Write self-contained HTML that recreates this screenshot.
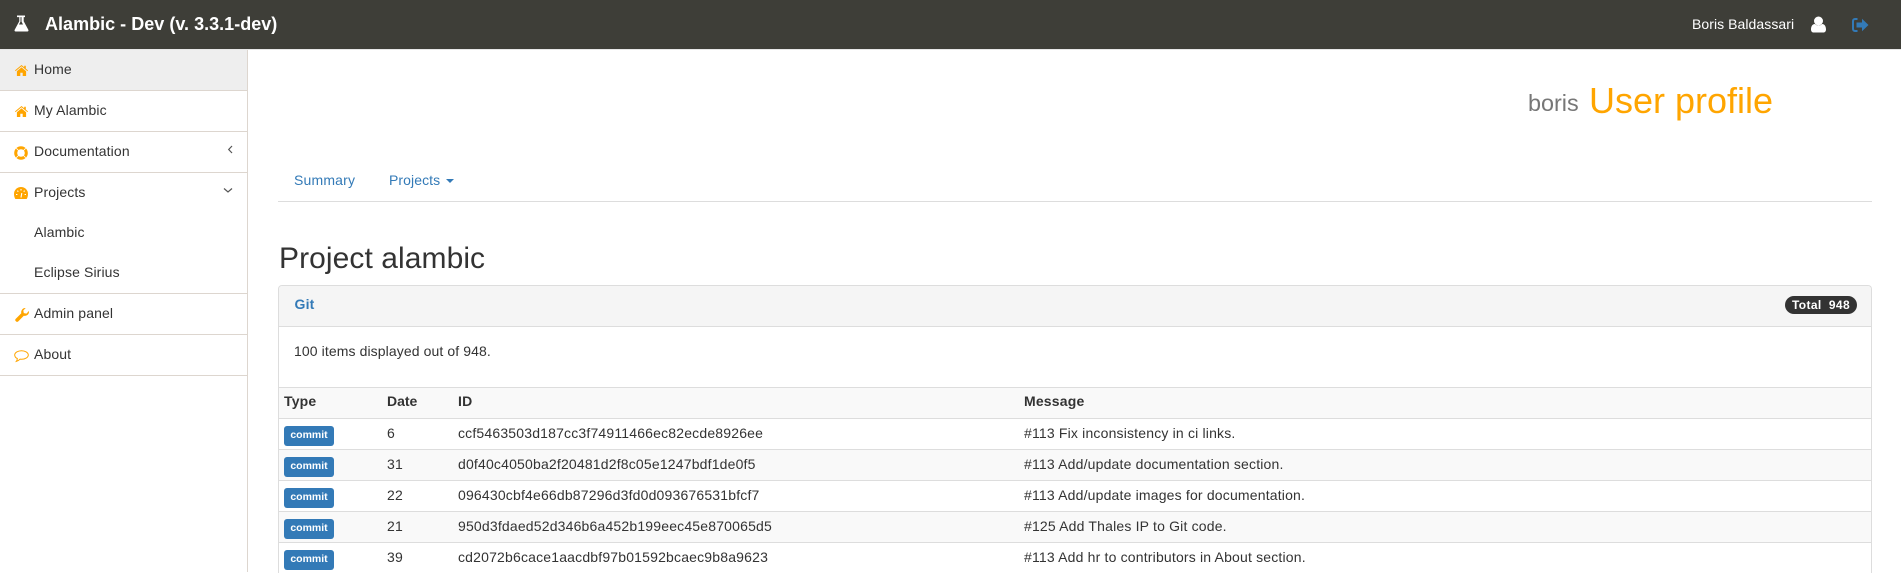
<!DOCTYPE html>
<html><head><meta charset="utf-8"><title>Alambic</title>
<style>
html,body{margin:0;padding:0;width:1901px;height:572px;overflow:hidden;background:#fff;font-family:"Liberation Sans",sans-serif;font-size:14px;color:#333;letter-spacing:.18px}
.a{position:absolute;white-space:nowrap}
#top{position:absolute;left:0;top:0;width:1901px;height:49px;background:#3e3e38}
#sep{position:absolute;left:0;top:49px;width:1901px;height:1px;background:#e7e7e7}
#side{position:absolute;left:0;top:50px;width:247px;height:522px;border-right:1px solid #ddd6cf}
.ln{position:absolute;left:0;width:247px;height:1px;background:#ddd6cf}
.m{position:absolute;left:34px;line-height:20px;color:#333;white-space:nowrap;letter-spacing:.12px}
.ic{position:absolute}
.h{position:absolute;left:278px;width:1594px;height:1px;background:#ddd}
.b{position:absolute;left:284px;width:50px;height:20px;background:#337ab7;border-radius:3px;color:#fff;font-weight:bold;font-size:10.5px;line-height:19px;text-align:center;letter-spacing:0}
</style></head><body>
<div id="top"></div><div id="sep"></div>
<svg class="ic" style="left:13px;top:15px" width="16" height="17" viewBox="0 0 16 17"><path d="M4 .5h8v1.600h-1.300v4.200l4.600 8.400c.5 1 0 1.800-1 1.800H2.700c-1 0-1.500-.8-1-1.800l4.600-8.400V2.100H4zM7.500 2.100v4.500L6 9.500h4L8.500 6.600V2.100z" fill="#fff" fill-rule="evenodd"/></svg>
<div class="a" style="left:45px;top:14px;font-size:18px;font-weight:bold;line-height:20px;color:#fff;letter-spacing:.02px">Alambic - Dev (v. 3.3.1-dev)</div>
<div class="a" style="left:1692px;top:14px;line-height:20px;color:#fff;letter-spacing:.06px">Boris Baldassari</div>
<svg class="ic" style="left:1810px;top:16px" width="17" height="17" viewBox="0 0 17 17"><circle cx="8.500" cy="5" r="4.500" fill="#fff"/><path d="M1 13.500c0-3 1.300-5.500 3.800-5.500C5.800 9 7 9.500 8.500 9.500S11.200 9 12.200 8c2.500 0 3.800 2.500 3.800 5.500 0 1.700-1 3-2.500 3h-10C2 16.500 1 15.200 1 13.500z" fill="#fff"/></svg>
<svg class="ic" style="left:1852px;top:18px" width="17" height="14" viewBox="0 0 17 14"><path d="M5.500 1H3C1.800 1 1 1.800 1 3v8c0 1.200.8 2 2 2h2.500" fill="none" stroke="#337ab7" stroke-width="2"/><path d="M4.500 4.500H10V.7L16.500 7 10 13.300V9.500H4.500z" fill="#337ab7"/></svg>

<div id="side"></div>
<div class="a" style="left:0;top:50px;width:247px;height:40px;background:#eee"></div>
<div class="ln" style="top:90px"></div>
<div class="ln" style="top:131px"></div>
<div class="ln" style="top:172px"></div>
<div class="ln" style="top:293px"></div>
<div class="ln" style="top:334px"></div>
<div class="ln" style="top:375px"></div>
<svg class="ic" style="left:15px;top:65px" width="13" height="11" viewBox="0 0 13 11"><path d="M6.500 0L0 5.400l.6.700 5.900-4.900 5.900 4.900.6-.7-2.200-1.800V.8H9.200v1.400zM1.900 6.300V11h3.400V7.800h2.400V11h3.400V6.300L6.500 2.400z" fill="#ffa500"/></svg>
<div class="m" style="top:59px">Home</div>
<svg class="ic" style="left:15px;top:106px" width="13" height="11" viewBox="0 0 13 11"><path d="M6.500 0L0 5.400l.6.700 5.900-4.900 5.900 4.900.6-.7-2.200-1.800V.8H9.200v1.400zM1.900 6.300V11h3.400V7.800h2.400V11h3.400V6.300L6.500 2.400z" fill="#ffa500"/></svg>
<div class="m" style="top:100px">My Alambic</div>
<svg class="ic" style="left:14px;top:146px" width="14" height="14" viewBox="0 0 14 14"><circle cx="7" cy="7" r="5.300" fill="none" stroke="#ffa500" stroke-width="3"/><path d="M2.300 2.300L4.700 4.700M11.700 2.300L9.300 4.700M2.300 11.700L4.700 9.300M11.700 11.700L9.300 9.300" stroke="#fff" stroke-width=".8"/></svg>
<div class="m" style="top:141px">Documentation</div>
<svg class="ic" style="left:227px;top:145px" width="7" height="9" viewBox="0 0 7 9"><path d="M5 1L1.700 4.500 5 8" fill="none" stroke="#555" stroke-width="1.200"/></svg>
<svg class="ic" style="left:14px;top:187px" width="14" height="12" viewBox="0 0 14 12"><path d="M7 0a7 7 0 0 0-7 7c0 2 .5 3.500 1.300 5h11.400C13.500 10.500 14 9 14 7a7 7 0 0 0-7-7z" fill="#ffa500"/><path d="M7 10.500L7.800 6M7 2v1.500M3.400 3.700l.9.900M10.600 3.700l-.9.900M2 7.500h1.400M10.600 7.500H12" stroke="#fff" stroke-width="1.100"/></svg>
<div class="m" style="top:182px">Projects</div>
<svg class="ic" style="left:223px;top:187px" width="10" height="7" viewBox="0 0 10 7"><path d="M1 1.500L5 5l4-3.500" fill="none" stroke="#555" stroke-width="1.200"/></svg>
<div class="m" style="top:222px">Alambic</div>
<div class="m" style="top:262px">Eclipse Sirius</div>
<svg class="ic" style="left:15px;top:308px" width="14" height="14" viewBox="0 0 14 14"><path d="M14 3.700a4.200 4.200 0 0 1-5.200 4L3.400 13.200a1.700 1.700 0 0 1-2.600-2.500l5.500-5.500A4.200 4.200 0 0 1 10.700 0L8.300 2.500l.5 2.600 2.700.5L13.800 3z" fill="#ffa500"/></svg>
<div class="m" style="top:303px">Admin panel</div>
<svg class="ic" style="left:14px;top:350px" width="15" height="13" viewBox="0 0 15 13"><path d="M7.500.7c3.500 0 6.800 1.800 6.800 4.300S11 9.300 7.500 9.300L6 9.200c-1 1-2.400 1.900-3.700 2.200.7-.9 1-1.900 1-2.900C1.800 7.800.7 6.500.7 5 .7 2.500 4 .7 7.500.7z" fill="none" stroke="#ffa500" stroke-width="1"/></svg>
<div class="m" style="top:344px">About</div>

<div class="a" style="left:1528px;top:88px;font-size:23.400px;line-height:30px;color:#777;letter-spacing:0">boris</div>
<div class="a" style="left:1589px;top:81px;font-size:36px;line-height:40px;color:#ffa500;letter-spacing:0">User profile</div>

<div class="a" style="left:294px;top:170px;line-height:20px;color:#337ab7">Summary</div>
<div class="a" style="left:389px;top:170px;line-height:20px;color:#337ab7;letter-spacing:.08px">Projects</div>
<div class="a" style="left:446px;top:179px;width:0;height:0;border-top:4px solid #337ab7;border-left:4px solid transparent;border-right:4px solid transparent"></div>
<div class="a" style="left:278px;top:201px;width:1594px;height:1px;background:#ddd"></div>

<div class="a" style="left:279px;top:241px;font-size:30px;line-height:36px;color:#333;letter-spacing:.07px">Project alambic</div>

<div class="a" style="left:278px;top:285px;width:1592px;height:287px;border:1px solid #ddd;border-bottom:none;border-radius:4px 4px 0 0"></div>
<div class="a" style="left:279px;top:286px;width:1592px;height:40px;background:#f5f5f5;border-radius:3px 3px 0 0"></div>
<div class="h" style="top:326px"></div>
<div class="a" style="left:294.500px;top:294px;line-height:20px;font-weight:bold;color:#337ab7">Git</div>
<div class="a" style="left:1785px;top:296px;width:72px;height:18px;background:#333;border-radius:9px;color:#fff;font-weight:bold;font-size:12px;line-height:18px;text-align:center;white-space:pre;letter-spacing:.35px">Total  948</div>
<div class="a" style="left:294px;top:341px;line-height:20px;letter-spacing:.1px">100 items displayed out of 948.</div>

<div class="a" style="left:279px;top:388px;width:1592px;height:30px;background:#f9f9f9"></div>
<div class="a" style="left:279px;top:450px;width:1592px;height:30px;background:#f9f9f9"></div>
<div class="a" style="left:279px;top:512px;width:1592px;height:30px;background:#f9f9f9"></div>
<div class="h" style="top:387px"></div>
<div class="h" style="top:418px"></div>
<div class="h" style="top:449px"></div>
<div class="h" style="top:480px"></div>
<div class="h" style="top:511px"></div>
<div class="h" style="top:542px"></div>

<div class="a" style="left:284px;top:391px;line-height:20px;font-weight:bold">Type</div>
<div class="a" style="left:387px;top:391px;line-height:20px;font-weight:bold;letter-spacing:0">Date</div>
<div class="a" style="left:458px;top:391px;line-height:20px;font-weight:bold">ID</div>
<div class="a" style="left:1024px;top:391px;line-height:20px;font-weight:bold">Message</div>

<div class="b" style="top:426px">commit</div>
<div class="a" style="left:387px;top:423px;line-height:20px">6</div>
<div class="a" style="left:458px;top:423px;line-height:20px">ccf5463503d187cc3f74911466ec82ecde8926ee</div>
<div class="a" style="left:1024px;top:423px;line-height:20px">#113 Fix inconsistency in ci links.</div>

<div class="b" style="top:457px">commit</div>
<div class="a" style="left:387px;top:454px;line-height:20px">31</div>
<div class="a" style="left:458px;top:454px;line-height:20px">d0f40c4050ba2f20481d2f8c05e1247bdf1de0f5</div>
<div class="a" style="left:1024px;top:454px;line-height:20px">#113 Add/update documentation section.</div>

<div class="b" style="top:488px">commit</div>
<div class="a" style="left:387px;top:485px;line-height:20px">22</div>
<div class="a" style="left:458px;top:485px;line-height:20px">096430cbf4e66db87296d3fd0d093676531bfcf7</div>
<div class="a" style="left:1024px;top:485px;line-height:20px">#113 Add/update images for documentation.</div>

<div class="b" style="top:519px">commit</div>
<div class="a" style="left:387px;top:516px;line-height:20px">21</div>
<div class="a" style="left:458px;top:516px;line-height:20px">950d3fdaed52d346b6a452b199eec45e870065d5</div>
<div class="a" style="left:1024px;top:516px;line-height:20px">#125 Add Thales IP to Git code.</div>

<div class="b" style="top:550px">commit</div>
<div class="a" style="left:387px;top:547px;line-height:20px">39</div>
<div class="a" style="left:458px;top:547px;line-height:20px">cd2072b6cace1aacdbf97b01592bcaec9b8a9623</div>
<div class="a" style="left:1024px;top:547px;line-height:20px">#113 Add hr to contributors in About section.</div>
</body></html>
